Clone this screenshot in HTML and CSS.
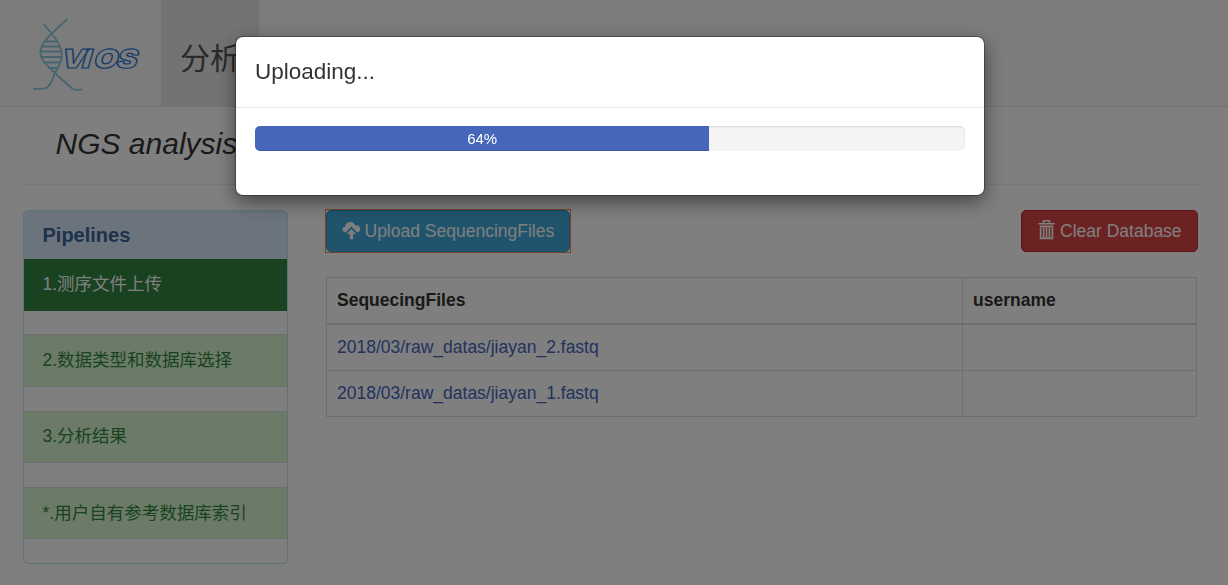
FILE: index.html
```
<!DOCTYPE html>
<html lang="zh-CN">
<head>
<meta charset="utf-8">
<title>NGS analysis</title>
<link rel="stylesheet" href="styles.css">
</head>
<body>
<nav class="navbar">
  <a class="brand" href="#">
    <svg class="logo" width="161" height="106" viewBox="0 0 161 106" role="img" aria-label="VIOS">
      <g class="logo-helix">
        <path d="M67 19.500L51.500 33.500C44 41 40.500 47 40.300 52C40.500 60 48 66.500 55 73C61 79 68 85 73 89C75.500 90.500 78 90 81.500 89.500"/>
        <path d="M44 24.500L51.500 33.500C58 41 62 48 61.800 56C61.500 63 58 68 55 73C52 80 51 85 47 87.500C43.500 89.500 40 88.500 34 89"/>
        <path d="M46.500 41.500H57M43 46.500H60M41 51.500H61.500M41 57H61.500M44 62.500H60M49 68H57.500"/>
      </g>
      <text class="logo-text" transform="translate(64 67.500) skewX(-16) scale(1.200 1)" x="-3.800 13.800 23.500 42.500" y="0">VIOS</text>
    </svg>
  </a>
  <a class="nav-item" href="#">分析</a>
</nav>
<main class="page">
  <h3 class="page-title">NGS analysis</h3>
  <div class="columns">
    <aside class="panel">
      <div class="panel-heading">Pipelines</div>
      <a class="step step-active" href="#">1.测序文件上传</a>
      <a class="step step-tall" href="#">2.数据类型和数据库选择</a>
      <a class="step" href="#">3.分析结果</a>
      <a class="step step-last" href="#">*.用户自有参考数据库索引</a>
    </aside>
    <section class="content">
      <div class="toolbar">
        <div class="focus-ring"><button class="btn btn-upload"><svg class="icon-cloud" width="19" height="19" viewBox="0 0 19 19"><path d="M2.700 11.200C-.8 9.800.1 5.900 3.200 5.700C3.500 2.400 7.100 0 10.400 1.400C12 2 12.900 3.200 13.300 4.600C16.500 3.900 18.700 6.200 18.300 8.500C18.100 10 17.200 10.800 16 11.200H15L9.400 5.600L3.800 11.200Z"/><path d="M9.400 8L14 13H11V18.200H7.800V13H4.800Z"/></svg>Upload SequencingFiles</button></div>
        <button class="btn btn-clear"><svg class="icon-trash" width="17" height="20" viewBox="0 0 17 20"><path d="M5.500 3V1.200Q5.500.7 6 .7H11Q11.500.7 11.500 1.200V3M.3 3.700H16.700M2.200 6.200H14.800M2.600 6V18.400H14.400V6M5.600 6V18M8.500 6V18M11.400 6V18"/></svg>Clear Database</button>
      </div>
      <table class="files">
        <colgroup><col class="col-file"><col class="col-user"></colgroup>
        <thead><tr><th>SequecingFiles</th><th>username</th></tr></thead>
        <tbody>
          <tr class="row-first"><td><a href="#">2018/03/raw_datas/jiayan_2.fastq</a></td><td></td></tr>
          <tr><td><a href="#">2018/03/raw_datas/jiayan_1.fastq</a></td><td></td></tr>
        </tbody>
      </table>
    </section>
  </div>
</main>
<div class="backdrop">
  <div class="modal" role="dialog">
    <h4 class="modal-header">Uploading...</h4>
    <div class="modal-body">
      <div class="progress"><div class="progress-bar" style="width: 64%">64%</div></div>
    </div>
  </div>
</div>
</body>
</html>
```
FILE: styles.css
```
* { box-sizing: border-box; }
body {
  margin: 0;
  height: 585px;
  overflow: hidden;
  background: #fff;
  color: #333;
  font: 17.5px/25px "Liberation Sans", "Noto Sans CJK SC", sans-serif;
}
a { text-decoration: none; }

.navbar {
  display: flex;
  height: 107px;
  background: #f8f8f8;
  border-bottom: 1px solid #e7e7e7;
}
.brand { width: 161px; }
.logo { display: block; }
.logo-helix { fill: none; stroke: #8fcbe0; stroke-width: 1.800; stroke-linecap: round; }
.logo-text {
  font: 900 26px Inter, sans-serif;
  fill: none;
  stroke: #2d78d8;
  stroke-width: 1.200;
}
.nav-item {
  width: 98px;
  height: 107px;
  padding: 40px 19px 0;
  background: #e7e7e7;
  color: #555;
  font-size: 30px;
  line-height: 38px;
  white-space: nowrap;
}

.page { padding: 0 30px 0 23px; }
.page-title {
  margin: 0 0 25px;
  height: 78px;
  padding: 19px 32.5px 0;
  border-bottom: 1px solid #eee;
  font-size: 30px;
  line-height: 36px;
  font-weight: 400;
  font-style: italic;
}
.columns { display: flex; gap: 38px; align-items: flex-start; }

.panel {
  display: flex;
  flex: none;
  flex-direction: column;
  gap: 24px;
  width: 265px;
  height: 354px;
  border: 1px solid #b4e4f0;
  border-radius: 5px;
  overflow: hidden;
}
.panel-heading {
  height: 48px;
  margin-bottom: -24px;
  padding: 11px 18.5px 0;
  background: #d7e8f8;
  color: #3a6496;
  font-size: 20px;
  font-weight: 700;
  line-height: 27px;
}
.step {
  flex: none;
  height: 52px;
  padding: 12px 18.5px 0;
  background: #d8f4d0;
  border: solid #ddd;
  border-width: 1px 0;
  color: #328640;
}
.step-active {
  margin-bottom: -1px;
  background: #328440;
  border-color: #328440;
  color: #fff;
}
.step-tall { height: 53px; padding-top: 13px; }
.step-last { padding-top: 13px; }

.content { flex: none; width: 872px; }
.toolbar {
  display: flex;
  justify-content: space-between;
}
.btn {
  display: flex;
  align-items: center;
  height: 42px;
  padding: 0;
  border: 1px solid;
  border-radius: 5px;
  color: #fff;
  font: inherit;
  white-space: nowrap;
}
.focus-ring { outline: 1px solid #ee8050; }
.btn-upload {
  width: 244px;
  padding-left: 14.5px;
  gap: 4px;
  background: #40a9d9;
  border-color: #28a1c5;
}
.btn-clear {
  width: 177px;
  padding-left: 16px;
  gap: 5px;
  background: #d94444;
  border-color: #b82828;
}
.icon-cloud { fill: #fff; margin-top: -1px; }
.icon-trash { fill: none; stroke: #fff; stroke-width: 1.600; margin-top: -3px; }

.files {
  width: 871px;
  margin-top: 25px;
  border-collapse: collapse;
  table-layout: fixed;
}
.col-file { width: 636px; }
.files th, .files td {
  height: 46px;
  padding: 0 10px;
  border: 1px solid #ddd;
  text-align: left;
}
.files th { border-bottom-width: 2px; }
.files .row-first td { height: 47px; padding-top: 1px; }
.files a { color: #4666ba; }

.backdrop {
  position: fixed;
  inset: 0;
  padding-top: 37px;
  background: rgba(0, 0, 0, .5);
}
.modal {
  width: 748px;
  height: 158px;
  margin: 0 auto 0 236px;
  background: #fff;
  border-radius: 7px;
  box-shadow: 0 0 0 1px rgba(0, 0, 0, .3), 0 6px 19px rgba(0, 0, 0, .5);
}
.modal-header {
  margin: 0;
  height: 71px;
  padding: 19px 19px 0;
  border-bottom: 1px solid #e5e5e5;
  font-size: 22.500px;
  line-height: 32px;
  font-weight: 400;
}
.modal-body { padding: 18px 19px; }
.progress {
  height: 25px;
  background: #f4f4f4;
  border-radius: 5px;
  overflow: hidden;
  box-shadow: inset 0 1px 2px rgba(0, 0, 0, .12);
}
.progress-bar {
  height: 100%;
  background: #4666ba;
  box-shadow: inset 0 -1px 0 rgba(0, 0, 0, .15);
  color: #fff;
  font-size: 15px;
  line-height: 26px;
  text-align: center;
}
```
